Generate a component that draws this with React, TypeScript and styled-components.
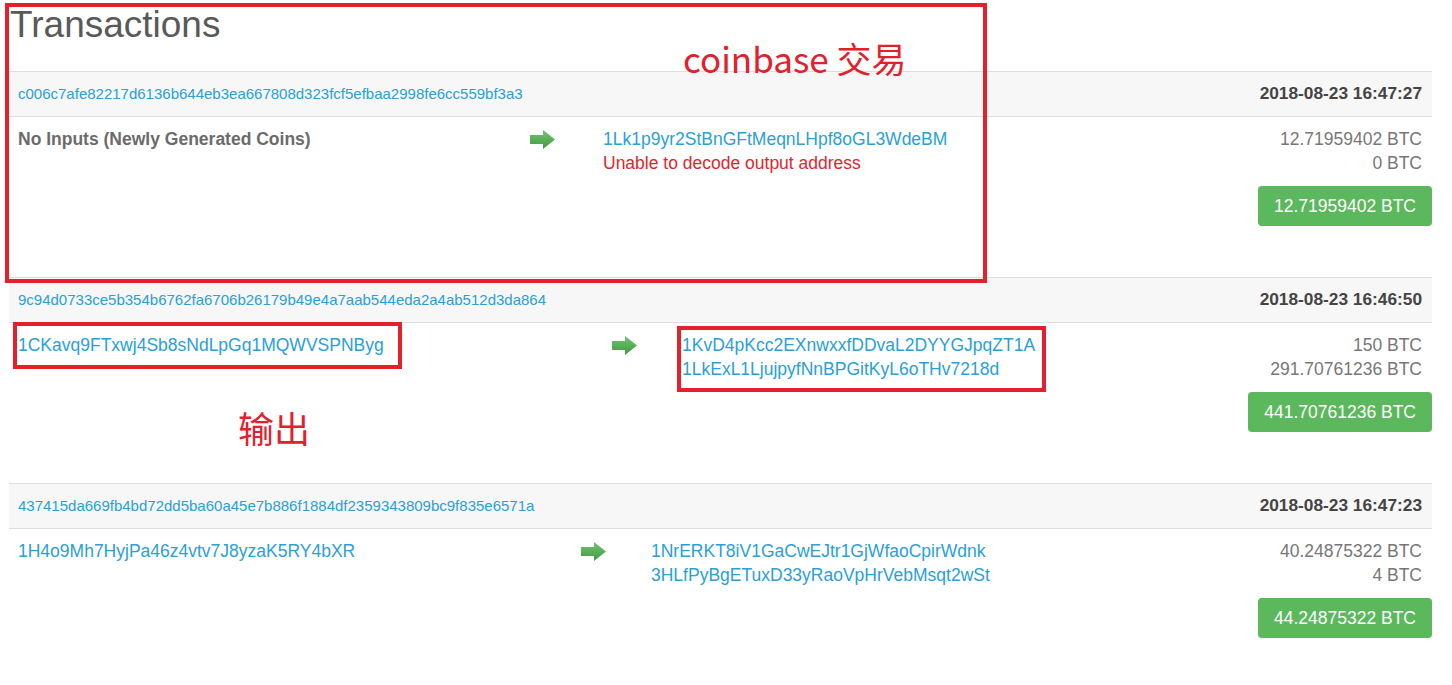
import React from "react";
import styled, { createGlobalStyle } from "styled-components";

const GlobalStyle = createGlobalStyle`
  html, body { margin: 0; padding: 0; background: #fff; }
  body { font-family: "Liberation Sans", Arial, Helvetica, sans-serif; }
  a { text-decoration: none; }
`;

const Page = styled.div`
  position: relative;
  width: 1452px;
  height: 685px;
  padding: 0 20px 0 9px;
  box-sizing: border-box;
  overflow: hidden;
`;

const Title = styled.h2`
  margin: 5px 0 26px 1px;
  font-size: 37px;
  line-height: 40px;
  font-weight: normal;
  color: #595959;
`;

const TxBlock = styled.section`
  margin-bottom: 51px;
`;

const TxHeader = styled.div`
  display: flex;
  align-items: center;
  justify-content: space-between;
  height: 42px;
  padding: 0 10px 2px 9px;
  background: #f7f7f7;
  border-top: 1px solid #dddddd;
  border-bottom: 1px solid #dddddd;
`;

const Hash = styled.a`
  font-size: 15px;
  color: #2a9fd8;
`;

const DateText = styled.span`
  font-size: 17.3px;
  font-weight: bold;
  color: #444;
`;

const TxBody = styled.div<{ $arrowX: number; $outX: number }>`
  display: grid;
  grid-template-columns: ${(p) => p.$arrowX - 9}px ${(p) => p.$outX - p.$arrowX}px 1fr auto;
  padding-top: 10px;
  font-size: 17.5px;
  line-height: 24px;
`;

const InputCell = styled.div`
  padding-left: 9px;
`;

const ArrowCell = styled.div`
  height: 24px;
  display: flex;
  align-items: center;
`;

const OutputsCell = styled.div`
  display: flex;
  flex-direction: column;
`;

const AddrLink = styled.a`
  color: #2a9fd8;
`;

const NoInputs = styled.span`
  font-weight: bold;
  color: #6b6b6b;
`;

const ErrorText = styled.span`
  color: #e0262d;
`;

const AmountCell = styled.div`
  display: flex;
  flex-direction: column;
  align-items: flex-end;
`;

const Amount = styled.span`
  color: #777;
  padding-right: 10px;
`;

const TotalButton = styled.button`
  margin-top: 11px;
  height: 40px;
  padding: 0 16px;
  border: none;
  border-radius: 4px;
  background: #5cb85c;
  color: #fff;
  font-family: inherit;
  font-size: 17.5px;
`;

const RedBox = styled.div<{ $l: number; $t: number; $w: number; $h: number }>`
  position: absolute;
  left: ${(p) => p.$l}px;
  top: ${(p) => p.$t}px;
  width: ${(p) => p.$w}px;
  height: ${(p) => p.$h}px;
  border: 4px solid #e3202b;
  box-sizing: border-box;
  pointer-events: none;
`;

const Note = styled.div<{ $l: number; $t: number; $size: number }>`
  position: absolute;
  left: ${(p) => p.$l}px;
  top: ${(p) => p.$t}px;
  font-family: "Noto Sans CJK SC", "Noto Sans", sans-serif;
  font-size: ${(p) => p.$size}px;
  line-height: 1;
  color: #e3202b;
  white-space: nowrap;
`;

const Arrow = () => (
  <svg width="25" height="19" viewBox="0 0 25 19">
    <defs>
      <linearGradient id="ag" x1="0" y1="0" x2="0" y2="1">
        <stop offset="0" stopColor="#74c474" />
        <stop offset="1" stopColor="#3f9a3f" />
      </linearGradient>
    </defs>
    <path d="M0 5 H13 V0 L25 9.5 L13 19 V14 H0 Z" fill="url(#ag)" />
  </svg>
);

type Tx = {
  hash: string;
  date: string;
  input: string | null;
  outputs: { text: string; error?: boolean }[];
  amounts: string[];
  total: string;
  arrowX: number;
  outX: number;
};

const txs: Tx[] = [
  {
    hash: "c006c7afe82217d6136b644eb3ea667808d323fcf5efbaa2998fe6cc559bf3a3",
    date: "2018-08-23 16:47:27",
    input: null,
    outputs: [
      { text: "1Lk1p9yr2StBnGFtMeqnLHpf8oGL3WdeBM" },
      { text: "Unable to decode output address", error: true },
    ],
    amounts: ["12.71959402 BTC", "0 BTC"],
    total: "12.71959402 BTC",
    arrowX: 530,
    outX: 603,
  },
  {
    hash: "9c94d0733ce5b354b6762fa6706b26179b49e4a7aab544eda2a4ab512d3da864",
    date: "2018-08-23 16:46:50",
    input: "1CKavq9FTxwj4Sb8sNdLpGq1MQWVSPNByg",
    outputs: [
      { text: "1KvD4pKcc2EXnwxxfDDvaL2DYYGJpqZT1A" },
      { text: "1LkExL1LjujpyfNnBPGitKyL6oTHv7218d" },
    ],
    amounts: ["150 BTC", "291.70761236 BTC"],
    total: "441.70761236 BTC",
    arrowX: 612,
    outX: 682,
  },
  {
    hash: "437415da669fb4bd72dd5ba60a45e7b886f1884df2359343809bc9f835e6571a",
    date: "2018-08-23 16:47:23",
    input: "1H4o9Mh7HyjPa46z4vtv7J8yzaK5RY4bXR",
    outputs: [
      { text: "1NrERKT8iV1GaCwEJtr1GjWfaoCpirWdnk" },
      { text: "3HLfPyBgETuxD33yRaoVpHrVebMsqt2wSt" },
    ],
    amounts: ["40.24875322 BTC", "4 BTC"],
    total: "44.24875322 BTC",
    arrowX: 581,
    outX: 651,
  },
];

export default function App() {
  return (
    <>
      <GlobalStyle />
      <Page>
        <Title>Transactions</Title>
        {txs.map((tx) => (
          <TxBlock key={tx.hash}>
            <TxHeader>
              <Hash href="#">{tx.hash}</Hash>
              <DateText>{tx.date}</DateText>
            </TxHeader>
            <TxBody $arrowX={tx.arrowX} $outX={tx.outX}>
              <InputCell>
                {tx.input ? (
                  <AddrLink href="#">{tx.input}</AddrLink>
                ) : (
                  <NoInputs>No Inputs (Newly Generated Coins)</NoInputs>
                )}
              </InputCell>
              <ArrowCell>
                <Arrow />
              </ArrowCell>
              <OutputsCell>
                {tx.outputs.map((o) =>
                  o.error ? (
                    <ErrorText key={o.text}>{o.text}</ErrorText>
                  ) : (
                    <AddrLink key={o.text} href="#">
                      {o.text}
                    </AddrLink>
                  )
                )}
              </OutputsCell>
              <AmountCell>
                {tx.amounts.map((a) => (
                  <Amount key={a}>{a}</Amount>
                ))}
                <TotalButton>{tx.total}</TotalButton>
              </AmountCell>
            </TxBody>
          </TxBlock>
        ))}
        <RedBox $l={5} $t={3} $w={982} $h={280} />
        <RedBox $l={13} $t={322} $w={389} $h={47} />
        <RedBox $l={677} $t={326} $w={369} $h={66} />
        <Note $l={683} $t={40} $size={35}>
          coinbase 交易
        </Note>
        <Note $l={238} $t={409} $size={36}>
          输出
        </Note>
      </Page>
    </>
  );
}
